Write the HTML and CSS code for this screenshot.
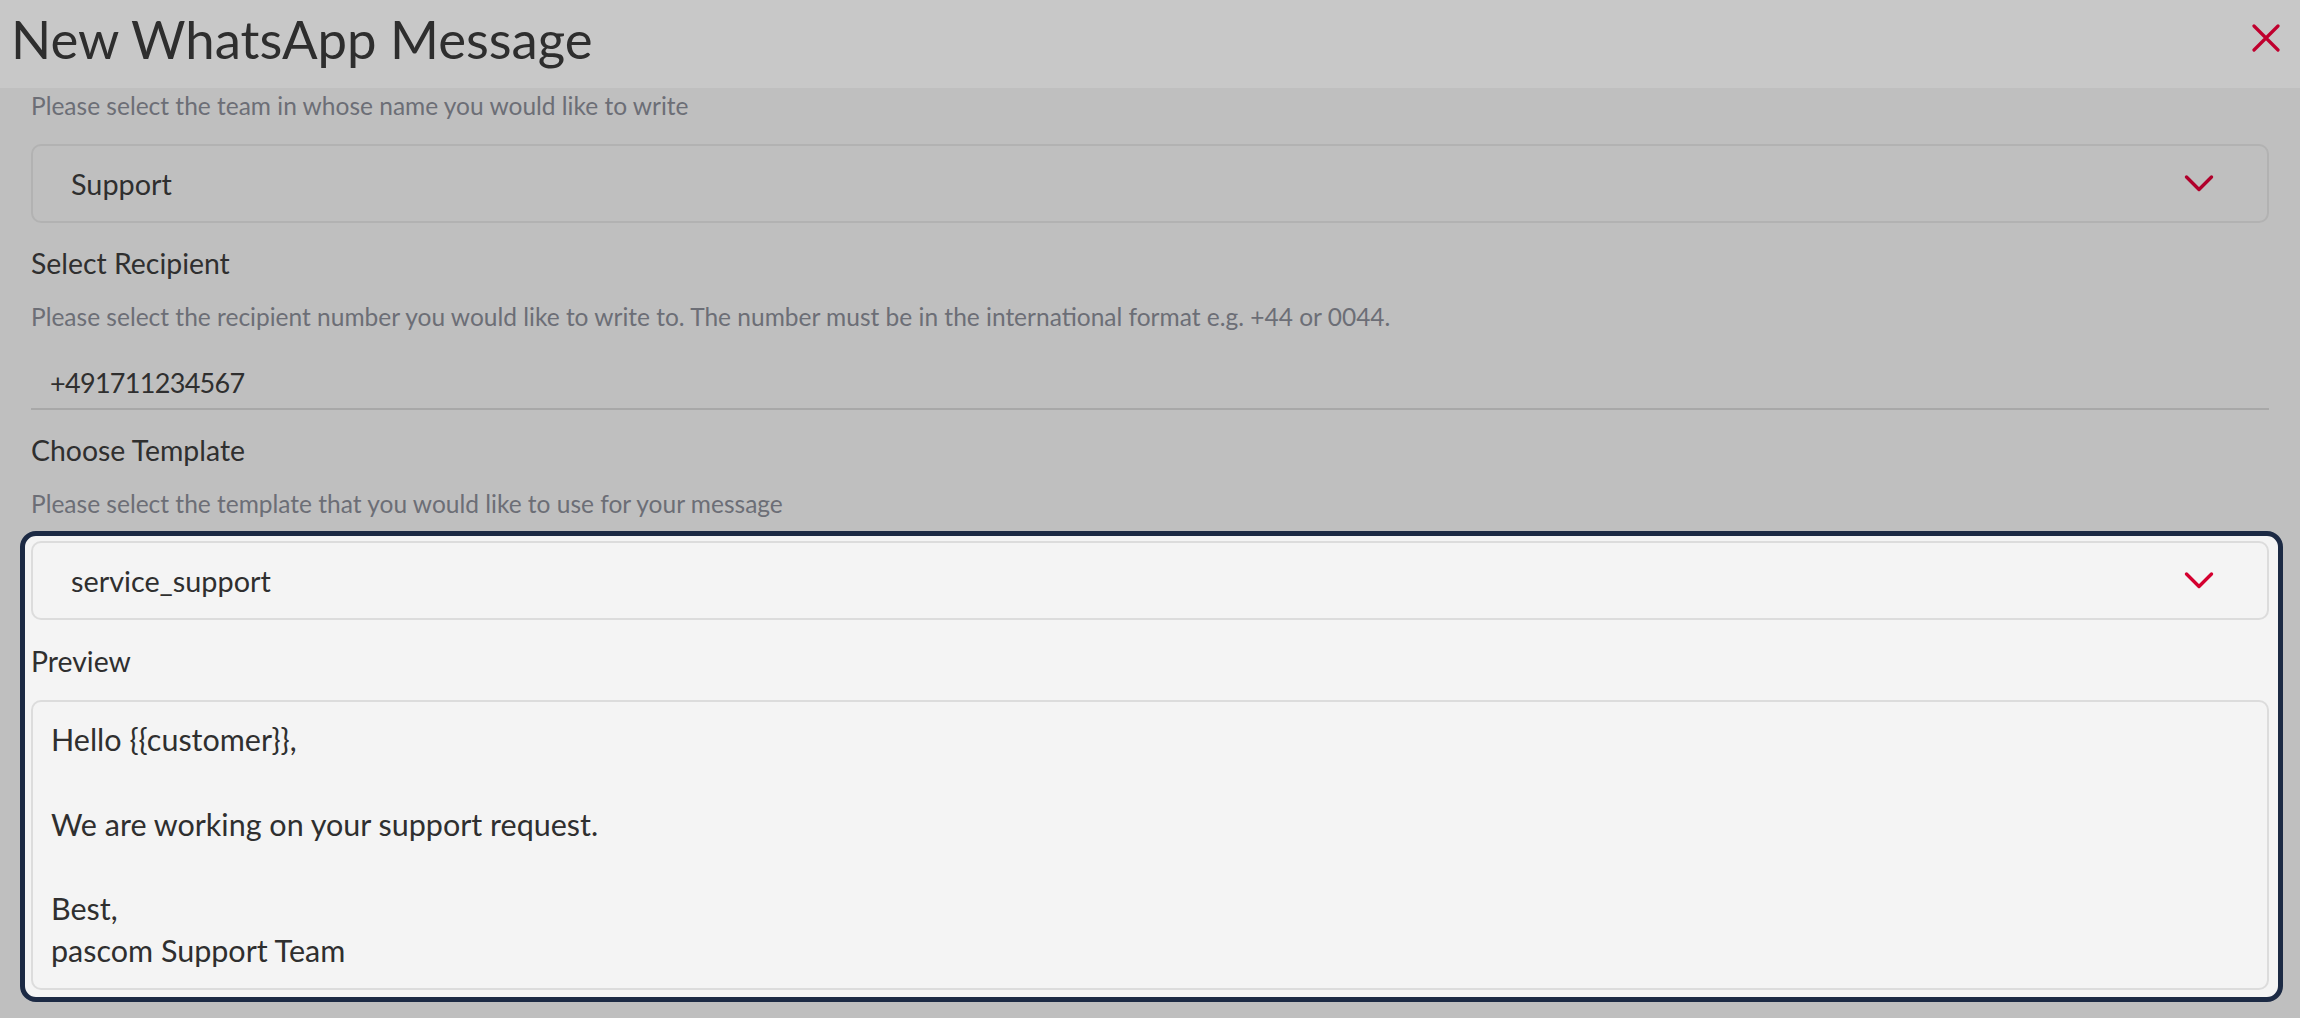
FILE: index.html
```html
<!DOCTYPE html>
<html lang="en">
<head>
<meta charset="utf-8">
<title>New WhatsApp Message</title>
<link rel="stylesheet" href="styles.css">
</head>
<body>
<div class="modal">
  <header class="modal-head">
    <h1 class="modal-title">New WhatsApp Message</h1>
    <button class="close-btn" type="button" aria-label="Close">
      <svg width="28" height="28" viewBox="0 0 28 28"><path d="M2 2 L26 26 M26 2 L2 26" stroke="currentColor" stroke-width="3.2" stroke-linecap="round" fill="none"/></svg>
    </button>
  </header>
  <div class="modal-body">
    <p class="hint hint-first">Please select the team in whose name you would like to write</p>
    <div class="select">
      <span class="select-value">Support</span>
      <svg class="chevron" width="30" height="20" viewBox="0 0 30 20"><polyline points="2.5,3 15,15.5 27.5,3" fill="none" stroke="currentColor" stroke-width="3.4" stroke-linecap="round" stroke-linejoin="round"/></svg>
    </div>

    <div class="label">Select Recipient</div>
    <p class="hint">Please select the recipient number you would like to write to. The number must be in the international format e.g. +44 or 0044.</p>
    <div class="line-input">+491711234567</div>

    <div class="label">Choose Template</div>
    <p class="hint">Please select the template that you would like to use for your message</p>

    <div class="spotlight">
      <div class="select select-light">
        <span class="select-value">service_support</span>
        <svg class="chevron" width="30" height="20" viewBox="0 0 30 20"><polyline points="2.5,3 15,15.5 27.5,3" fill="none" stroke="currentColor" stroke-width="3.4" stroke-linecap="round" stroke-linejoin="round"/></svg>
      </div>
      <div class="label preview-label">Preview</div>
      <div class="preview">
        <div>Hello {{customer}},</div>
        <div>&nbsp;</div>
        <div>We are working on your support request.</div>
        <div>&nbsp;</div>
        <div>Best,</div>
        <div>pascom Support Team</div>
      </div>
    </div>
  </div>
</div>
</body>
</html>
```

FILE: styles.css
```css
* { box-sizing: border-box; }

html, body {
  margin: 0;
  padding: 0;
  background: #bfbfbf;
  font-family: "Lato", "Liberation Sans", sans-serif;
  color: #2f2f2f;
}

.modal {
  width: 2300px;
  min-height: 1018px;
  background: #bfbfbf;
}

.modal-head {
  height: 88px;
  background: #c8c8c8;
  display: flex;
  align-items: flex-start;
  justify-content: space-between;
  padding: 0 20px 0 11px;
}

.modal-title {
  margin: 0;
  font-weight: 400;
  font-size: 52.7px;
  line-height: 77px;
  color: #2e2e2e;
}

.close-btn {
  margin-top: 24px;
  width: 28px;
  height: 28px;
  padding: 0;
  border: 0;
  background: none;
  color: #c0002e;
  display: flex;
}

.modal-body {
  padding: 0 31px;
}

.hint {
  margin: 16px 0 0;
  font-size: 24.5px;
  line-height: 36px;
  color: #6c6e76;
}

.hint-first {
  margin-top: 0;
}

.select {
  margin-top: 20px;
  height: 79px;
  border: 2px solid #b2b2b2;
  border-radius: 10px;
  display: flex;
  align-items: center;
  justify-content: space-between;
  padding: 0 53px 0 38px;
  color: #b0002b;
}

.select-value {
  font-size: 28.8px;
  color: #2f2f2f;
}

.chevron {
  display: block;
}

.label {
  margin-top: 20px;
  font-size: 28.4px;
  line-height: 40px;
  color: #2f2f2f;
}

.line-input {
  margin-top: 21px;
  height: 54px;
  padding: 0 0 0 19px;
  border-bottom: 2px solid #a8a8a8;
  display: flex;
  align-items: center;
  font-size: 27px;
  letter-spacing: -0.7px;
  color: #2f2f2f;
}

.spotlight {
  margin: 9px -14px 0 -11px;
  padding: 5px 9px 7px 6px;
  background: #f4f4f4;
  border: 5px solid #1c2a44;
  border-radius: 16px;
}

.select-light {
  margin-top: 0;
  border-color: #dcdcdc;
  color: #d4002f;
}

.preview-label {
  margin-top: 21px;
}

.preview {
  margin-top: 19px;
  height: 290px;
  border: 2px solid #dcdcdc;
  border-radius: 10px;
  padding: 16px 18px 0;
  font-size: 30.5px;
  line-height: 42.3px;
  color: #2f2f2f;
}
```
